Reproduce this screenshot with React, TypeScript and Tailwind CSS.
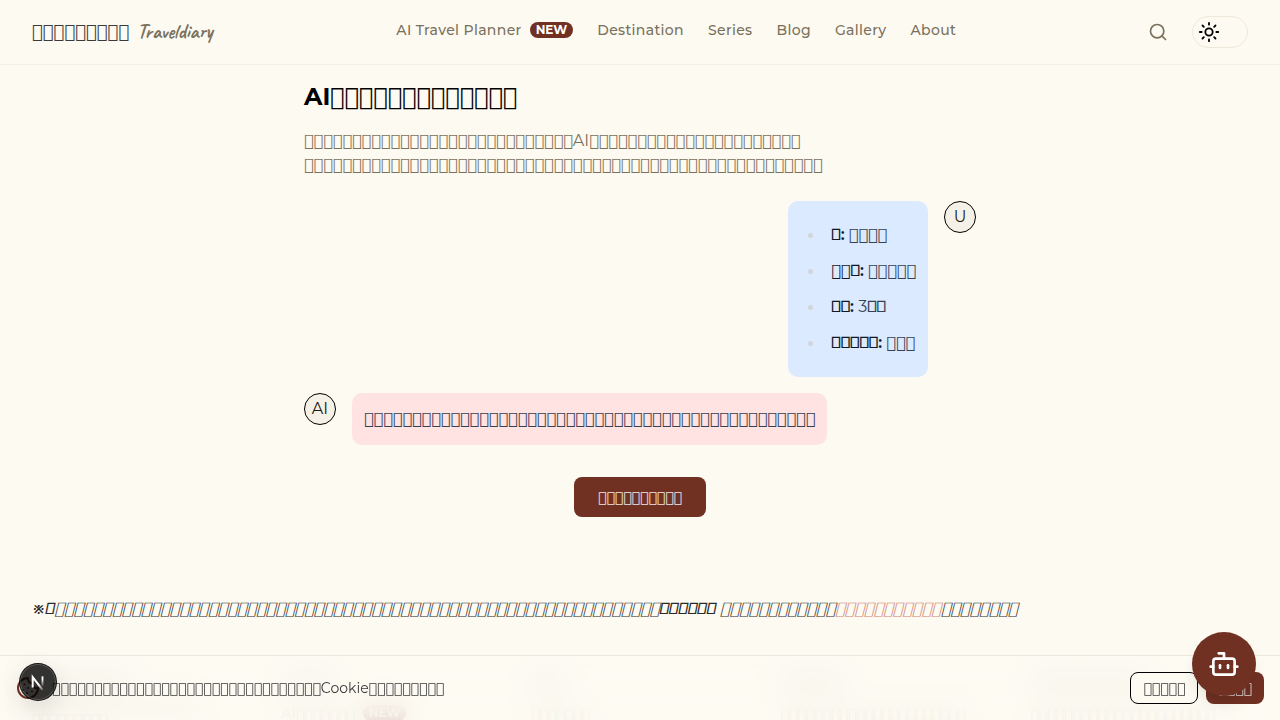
import { Bot, Cookie, Search, Sun } from 'lucide-react';

const GLYPH = '\ue5f3';

/** A run of wide glyphs. */
function Run({ n, className = '' }: { n: number; className?: string }) {
  return <span className={`font-['DejaVu_Sans'] font-normal leading-none ${className}`}>{GLYPH.repeat(n)}</span>;
}

/** A run of wide glyphs set slanted. */
function Slanted({ n }: { n: number }) {
  return <span className="font-['DejaVu_Sans_Light','DejaVu_Math_TeX_Gyre',Montserrat] font-normal italic leading-none">{GLYPH.repeat(n)}</span>;
}

/** A run of narrow glyphs in the body face. */
function Narrow({ n }: { n: number }) {
  return <span className="font-[Montserrat] leading-none">{GLYPH.repeat(n)}</span>;
}

const navItems = ['Destination', 'Series', 'Blog', 'Gallery', 'About'];

const footerColumns = [
  { title: 5, link: 7, prefix: 'AI', isNew: true },
  { title: 3, link: 7 },
  { title: 6, link: 22 },
  { title: 11, link: 22 },
];

function NewBadge() {
  return (
    <span className="flex h-4 items-center rounded-full bg-[#703123] px-1.5 text-xs font-bold tracking-normal text-white">
      NEW
    </span>
  );
}

function Header() {
  return (
    <header className="sticky top-0 z-20 flex h-[65px] items-center justify-between border-b border-[#f4f0e4] bg-[#fdfaf2] px-8">
      <a href="#home" className="flex items-center gap-2">
        <Run n={9} className="text-lg text-[#3a3a3a]" />
        <span className="font-[Caveat,cursive] text-xl font-bold text-[#7a715c]">Traveldiary</span>
      </a>
      <nav className="flex items-center gap-6 pb-1 text-sm font-medium tracking-wide text-[#7a715c]">
        <a href="#planner" className="flex items-center gap-2">
          AI Travel Planner
          <NewBadge />
        </a>
        {navItems.map((item) => (
          <a key={item} href={`#${item.toLowerCase()}`}>
            {item}
          </a>
        ))}
      </nav>
      <div className="flex items-center gap-4">
        <button aria-label="Search" className="flex size-9 items-center justify-center text-[#7a715c]">
          <Search size={20} />
        </button>
        <button aria-label="Toggle theme" className="flex h-8 w-14 items-center rounded-full border border-[#efe9da] pl-[5px] text-black">
          <Sun size={22} />
        </button>
      </div>
    </header>
  );
}

function Avatar({ label }: { label: string }) {
  return (
    <div className="flex size-8 shrink-0 items-center justify-center rounded-full border border-black bg-[#f5f1e6] text-base leading-7 text-[#1a1a1a]">
      {label}
    </div>
  );
}

function Trip() {
  const rows = [
    { key: 'place', label: <Narrow n={1} />, value: <Run n={4} /> },
    { key: 'dest', label: <><Run n={2} /><Narrow n={1} /></>, value: <Run n={5} /> },
    { key: 'days', label: <Narrow n={2} />, value: <>3<Narrow n={2} /></> },
    { key: 'theme', label: <Narrow n={5} />, value: <Run n={3} /> },
  ];
  return (
    <ul className="flex flex-col gap-2 rounded-[10px] bg-[#dbeafe] px-3 py-5 leading-7 text-[#364153]">
      {rows.map((row) => (
        <li key={row.key} className="flex h-7 items-center whitespace-nowrap pl-2">
          <span className="mr-[18px] size-[5px] rounded-full bg-[#d1d5dc]" />
          <span>
            <strong className="font-semibold text-[#101828]">{row.label}:</strong> {row.value}
          </span>
        </li>
      ))}
    </ul>
  );
}

function NextLogo() {
  return (
    <svg width="38" height="38" viewBox="0 0 38 38" fill="none" aria-hidden="true">
      <defs>
        <linearGradient id="diag" x1="14" y1="13" x2="24" y2="27" gradientUnits="userSpaceOnUse">
          <stop offset="0.6" stopColor="#fff" />
          <stop offset="1" stopColor="#fff" stopOpacity="0.2" />
        </linearGradient>
        <linearGradient id="stem" x1="24" y1="13" x2="24" y2="24" gradientUnits="userSpaceOnUse">
          <stop offset="0.3" stopColor="#fff" />
          <stop offset="1" stopColor="#fff" stopOpacity="0" />
        </linearGradient>
      </defs>
      <path d="M13.7 24.4V14.2L23.6 26.8" stroke="url(#diag)" strokeWidth="2" />
      <path d="M23.5 13.3V23.5" stroke="url(#stem)" strokeWidth="1.8" />
    </svg>
  );
}

function CookieBar() {
  return (
    <div className="fixed inset-x-0 bottom-0 z-30 flex items-center gap-3 border-t border-[#ece8dc] bg-[#fdfaf2]/85 p-4 text-sm text-[#3a3a3a] backdrop-blur-md">
      <Cookie size={24} className="shrink-0 text-[#703123]" />
      <p className="flex-1">
        <Run n={32} />
        Cookie
        <Run n={9} />
      </p>
      <div className="flex gap-2">
        <button className="h-8 rounded-lg border border-black bg-[#fdfaf2] px-3">
          <Run n={5} />
        </button>
        <button className="h-8 rounded-lg bg-[#703123] px-3 text-white/80">
          <Run n={4} />
        </button>
      </div>
    </div>
  );
}

export default function App() {
  return (
    <div className="min-h-screen bg-[#fdfaf2] font-[Montserrat,Inter,sans-serif] text-base">
      <Header />
      <main>
        <section className="mx-auto max-w-2xl pt-4">
          <h1 className="text-2xl font-bold text-black">
            AI
            <Run n={13} />
          </h1>
          <p className="mt-4 leading-6 text-[#7a715c]">
            <Run n={28} />
            AI
            <Run n={22} />
            <br />
            <Run n={54} />
          </p>
          <div className="mt-6 flex items-start justify-end gap-4">
            <Trip />
            <Avatar label="U" />
          </div>
          <div className="mt-4 flex items-start gap-4">
            <Avatar label="AI" />
            <p className="rounded-[10px] bg-[#ffe2e2] p-3 leading-7 text-[#364153]">
              <Run n={47} />
            </p>
          </div>
          <div className="mt-8 flex justify-center">
            <button className="h-10 rounded-lg bg-[#703123] px-6 text-sm text-white/90">
              <Run n={10} />
            </button>
          </div>
        </section>
        <p className="mt-20 px-8 italic leading-6 text-[#2a2a2a]">
          <span className="font-['DejaVu_Sans'] leading-none">※</span>
          <Narrow n={1} />
          <Slanted n={63} />
          <Narrow n={6} /> <Slanted n={12} />
          <a href="#contact" className="text-[#cf8070] underline">
            <Slanted n={11} />
          </a>
          <Slanted n={8} />
        </p>
      </main>
      <footer className="mt-12 grid grid-cols-5 gap-8 px-8 pt-1 text-sm text-[#7a715c]">
        <div className="leading-4">
          <Run n={9} className="block pb-1 text-lg text-[#3a3a3a] blur-sm" />
          <p>
            <Run n={20} className="inline-block blur-sm" />
            <br />
            <Run n={9} />
          </p>
        </div>
        {footerColumns.map((col) => (
          <div key={col.title} className="flex flex-col gap-3">
            <Run n={col.title} className="text-lg text-[#3a3a3a] blur-sm" />
            <a href="#more" className="flex items-center gap-2 leading-5">
              <span>
                {col.prefix}
                <Run n={col.link} />
              </span>
              {col.isNew && <NewBadge />}
            </a>
          </div>
        ))}
      </footer>
      <CookieBar />
      <button
        aria-label="Open developer tools"
        className="fixed bottom-[19px] left-[19px] z-40 size-[38px] rounded-full border border-black/60 bg-black/80 shadow-[inset_0_0_0_1px_rgba(255,255,255,0.18),0_8px_24px_rgba(0,0,0,0.12)]"
      >
        <span className="-m-px block">
          <NextLogo />
        </span>
      </button>
      <button
        aria-label="Open chat assistant"
        className="fixed bottom-6 right-6 z-40 flex size-16 items-center justify-center rounded-full bg-[#703123] text-white shadow-lg"
      >
        <Bot size={32} />
      </button>
    </div>
  );
}
